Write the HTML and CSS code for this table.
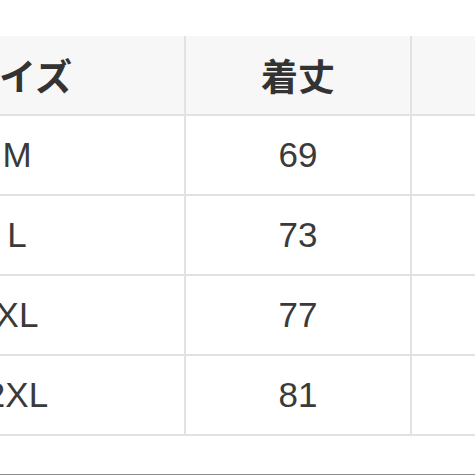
FILE: index.html
```html
<!DOCTYPE html>
<html lang="ja">
<head>
<meta charset="utf-8">
<link rel="stylesheet" href="styles.css">
</head>
<body>
<div class="page">
  <div class="size-table">
    <div class="cell head">サイズ</div>
    <div class="cell head">着丈</div>
    <div class="cell head"></div>
    <div class="cell">M</div>
    <div class="cell">69</div>
    <div class="cell"></div>
    <div class="cell">L</div>
    <div class="cell">73</div>
    <div class="cell"></div>
    <div class="cell">XL</div>
    <div class="cell">77</div>
    <div class="cell"></div>
    <div class="cell">2XL</div>
    <div class="cell">81</div>
    <div class="cell"></div>
  </div>
  <div class="rule"></div>
</div>
</body>
</html>
```
FILE: styles.css
```css
html, body {
  margin: 0;
  padding: 0;
  background: #ffffff;
  overflow: hidden;
}
.page {
  width: 475px;
  height: 475px;
  overflow: hidden;
  padding-top: 36px;
  box-sizing: border-box;
}
.size-table {
  display: grid;
  grid-template-columns: 334px 224px 224px;
  grid-template-rows: repeat(5, 78px);
  gap: 2px;
  padding-bottom: 2px;
  margin-left: -150px;
  width: 786px;
  background: #e2e2e2;
}
.cell {
  background: #ffffff;
  display: flex;
  align-items: center;
  justify-content: center;
  font-family: "Liberation Sans", "Noto Sans CJK JP", sans-serif;
  font-size: 35px;
  color: #3a3a3a;
}
.cell.head {
  background: #f7f7f7;
  font-family: "Noto Sans CJK JP", sans-serif;
  font-weight: 700;
  font-size: 37px;
  color: #333333;
}
.rule {
  margin-top: 38px;
  border-top: 1px solid #8c8c8c;
}
```
